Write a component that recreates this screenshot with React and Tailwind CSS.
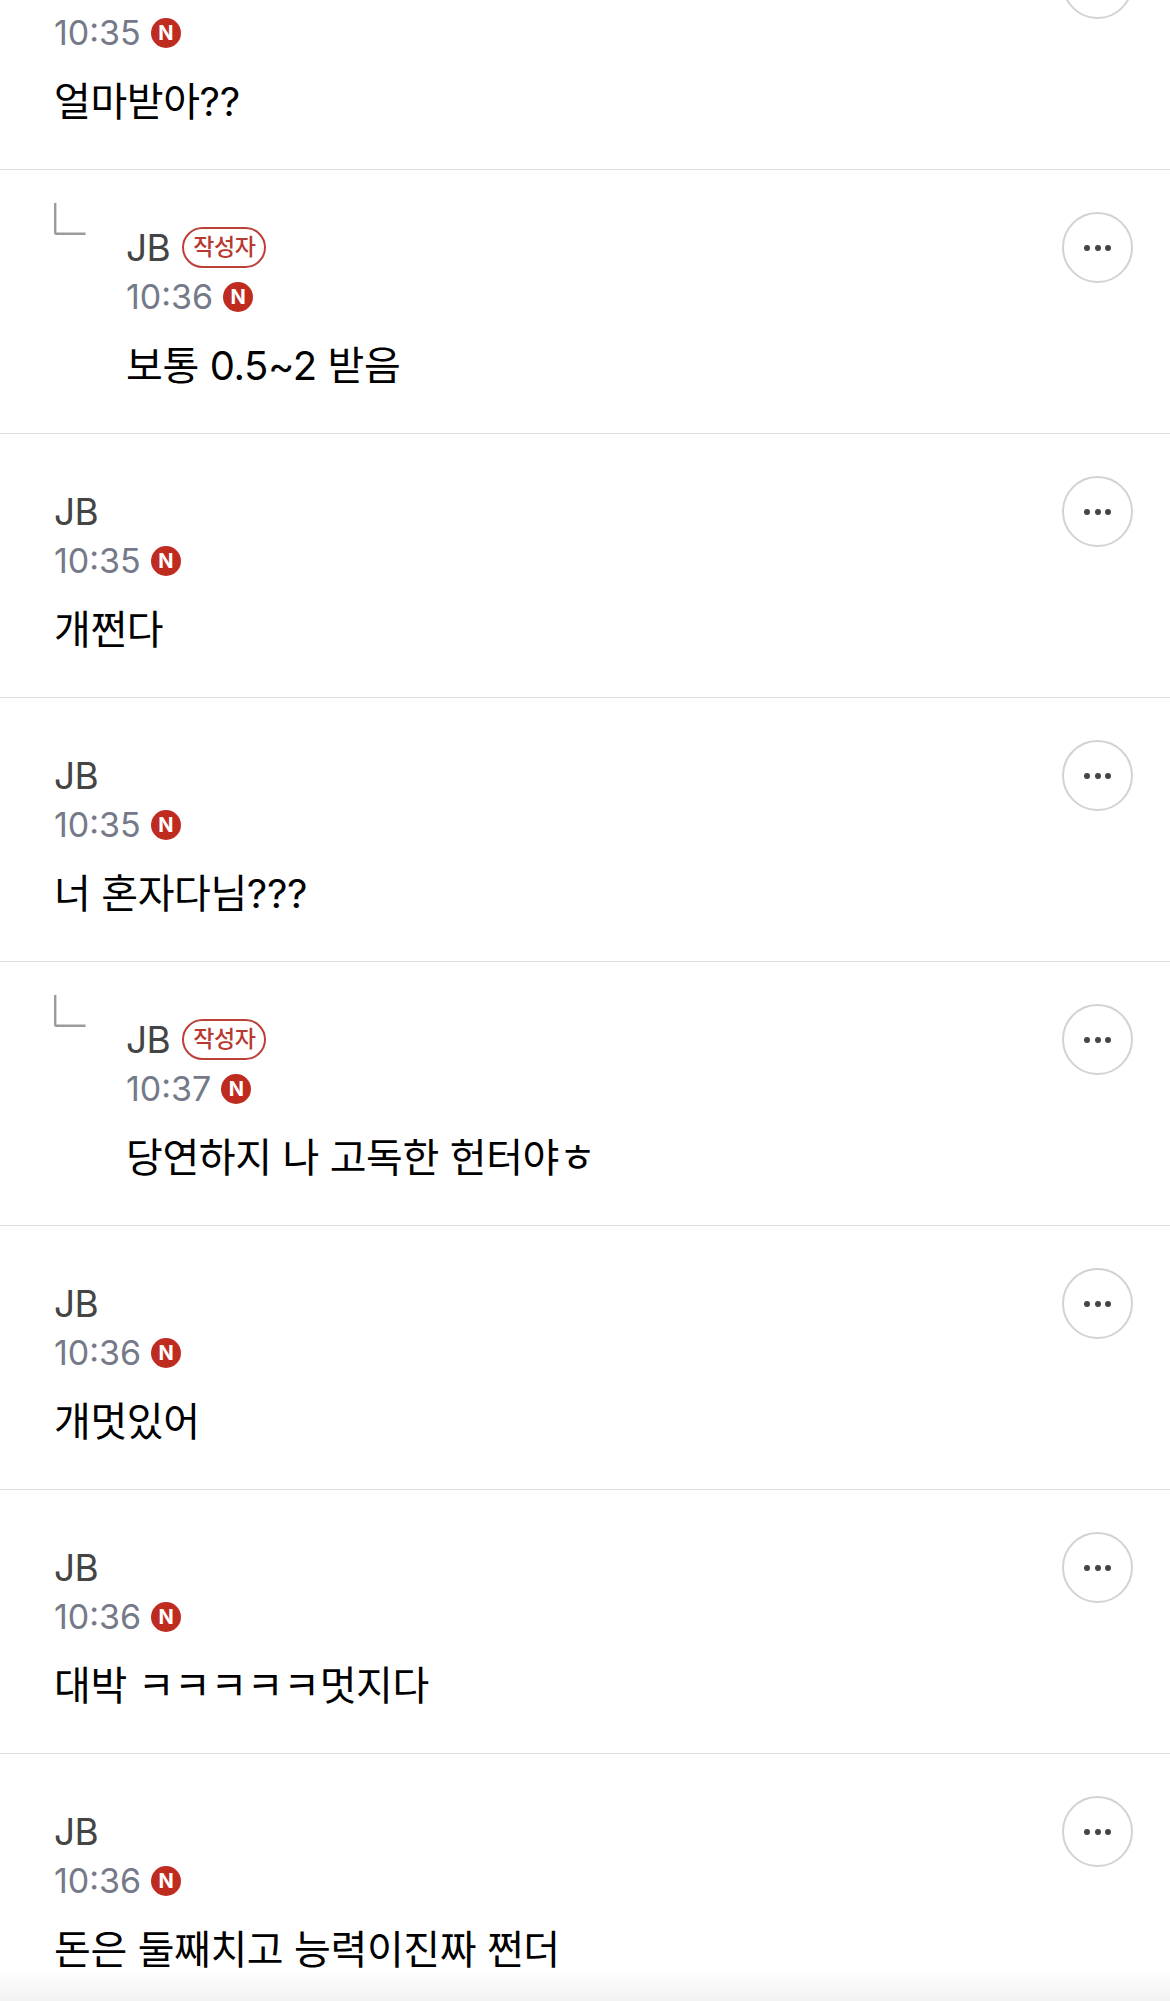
const COMMENTS = [
  { time: '10:35', text: '얼마받아??', noName: true },
  { time: '10:36', text: '보통 0.5~2 받음', reply: true },
  { time: '10:35', text: '개쩐다' },
  { time: '10:35', text: '너 혼자다님???' },
  { time: '10:37', text: '당연하지 나 고독한 헌터야ㅎ', reply: true },
  { time: '10:36', text: '개멋있어' },
  { time: '10:36', text: '대박 ㅋㅋㅋㅋㅋ멋지다' },
  { time: '10:36', text: '돈은 둘째치고 능력이진짜 쩐더' },
];

function ReplyMark() {
  return (
    <svg className="-mt-[9px] h-[32px] w-[72px] shrink-0" viewBox="0 0 72 32" fill="none">
      <path d="M1.2 0V29.5C1.2 30.3 1.7 30.8 2.5 30.8H31.5" stroke="#9b9b9b" strokeWidth="2.4" />
    </svg>
  );
}

function Comment({ time, text, reply, noName }) {
  return (
    <div className="flex items-start border-b border-[#dcdcdc] pt-[42px] pr-[37px] pb-[42px] pl-[54px]">
      {reply && <ReplyMark />}
      <div className="min-w-0 flex-1 pt-[11px]">
        <div className="flex h-[49px] items-center gap-[12px]">
          {!noName && <span className="text-[37px] tracking-[-0.5px] text-[#444444]">JB</span>}
          {reply && (
            <span className="flex h-[41px] w-[84px] items-center justify-center rounded-full border-2 border-[#bb4038] text-[23px] font-medium tracking-[-0.5px] text-[#b8392f]">
              작성자
            </span>
          )}
        </div>
        <div className="flex h-[49px] items-center gap-[10px]">
          <span className="text-[34px] text-[#747a88]">{time}</span>
          <span className="flex h-[30px] w-[30px] items-center justify-center rounded-full bg-[#c02b1f] text-[20px] font-bold text-white">
            N
          </span>
        </div>
        <div className="mt-[20px] flex h-[50px] items-center text-[40px] tracking-[-0.4px] whitespace-nowrap text-black">
          {text}
        </div>
      </div>
      <button className="flex h-[71px] w-[71px] shrink-0 items-center justify-center gap-[4.5px] rounded-full border-2 border-[#d2d2d2] bg-white">
        <span className="h-[6px] w-[6px] rounded-full bg-[#444444]" />
        <span className="h-[6px] w-[6px] rounded-full bg-[#444444]" />
        <span className="h-[6px] w-[6px] rounded-full bg-[#444444]" />
      </button>
    </div>
  );
}

export default function App() {
  return (
    <div className="relative h-[2001px] w-[1170px] overflow-hidden bg-white font-['Inter','Noto_Sans_CJK_KR',sans-serif]">
      <div className="-mt-[94px]">
        {COMMENTS.map((c, i) => (
          <Comment key={i} {...c} />
        ))}
      </div>
      {/* soft shadow of the bottom bar */}
      <div className="absolute inset-x-0 bottom-0 h-[32px] bg-gradient-to-b from-transparent to-[#f2f2f2]" />
    </div>
  );
}
